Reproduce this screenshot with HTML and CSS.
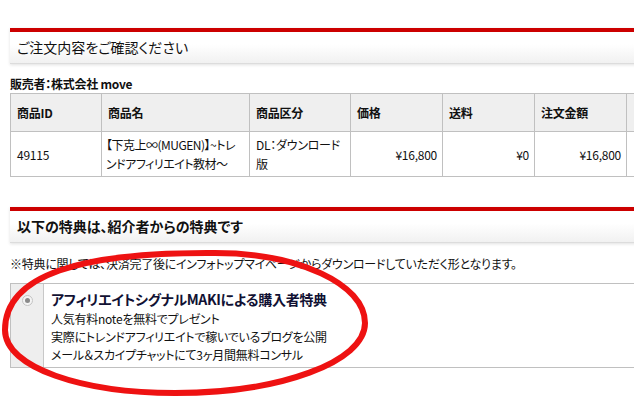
FILE: index.html
```html
<!DOCTYPE html>
<html lang="ja">
<head>
  <meta charset="UTF-8">
  <meta name="viewport" content="width=device-width, initial-scale=1.0">
  <title>ご注文内容の確認</title>
  <link rel="stylesheet" href="styles.css">
</head>
<body>
  <div class="page">
    <div class="section-head">
      <h2>ご注文内容をご確認ください</h2>
    </div>
    <p class="seller">販売者：株式会社 move</p>
    <table class="order">
      <colgroup>
        <col style="width: 91px">
        <col style="width: 148px">
        <col style="width: 101px">
        <col style="width: 92px">
        <col style="width: 92px">
        <col style="width: 92px">
        <col style="width: 100px">
      </colgroup>
      <thead>
        <tr>
          <th>商品ID</th>
          <th>商品名</th>
          <th>商品区分</th>
          <th>価格</th>
          <th>送料</th>
          <th>注文金額</th>
          <th></th>
        </tr>
      </thead>
      <tbody>
        <tr>
          <td>49115</td>
          <td class="name">【下克上∞(MUGEN)】~トレンドアフィリエイト教材～</td>
          <td>DL：ダウンロード版</td>
          <td class="num">¥16,800</td>
          <td class="num">¥0</td>
          <td class="num">¥16,800</td>
          <td></td>
        </tr>
      </tbody>
    </table>

    <div class="section-head">
      <h2 class="strong">以下の特典は、紹介者からの特典です</h2>
    </div>
    <p class="note">※特典に関しては、決済完了後にインフォトップマイページからダウンロードしていただく形となります。</p>
    <div class="bonus">
      <div class="bonus-check"><span class="radio"></span></div>
      <div class="bonus-body">
        <div class="bonus-title">アフィリエイトシグナルMAKIによる購入者特典</div>
        <p>人気有料noteを無料でプレゼント</p>
        <p>実際にトレンドアフィリエイトで稼いでいるブログを公開</p>
        <p>メール＆スカイプチャットにて3ヶ月間無料コンサル</p>
      </div>
    </div>
  </div>

  <!-- hand-drawn marker circle around the bonus -->
  <svg class="mark" width="634" height="410" viewBox="0 0 634 410">
    <path d="M5 330 C5 275 80 252 215 253 C298 253 365 284 365 323 C365 362 280 393 175 393 C83 393 5 368 5 330 Z" fill="none" stroke="#ee1212" stroke-width="6"/>
  </svg>
</body>
</html>
```

FILE: styles.css
```css
html, body {
  margin: 0;
  overflow: hidden;
}
body {
  position: relative;
  width: 634px;
  height: 410px;
  background: #fff;
  color: #111;
  font-family: "Noto Sans CJK JP", "Liberation Sans", sans-serif;
  font-size: 12px;
  font-feature-settings: "palt";
  letter-spacing: -0.25px;
}
.page {
  width: 716px;
  padding: 28px 0 0 10px;
}
.section-head {
  border-top: 4px solid #cc0000;
  background: linear-gradient(#fff 40%, #f1f1f1);
  border-bottom: 1px solid #dcdcdc;
  box-shadow: 0 1px 3px rgba(0, 0, 0, 0.12);
}
.section-head h2 {
  margin: 0;
  padding-left: 7px;
  height: 31px;
  line-height: 31px;
  font-size: 14px;
  font-weight: normal;
  color: #111;
  letter-spacing: 0;
}
.section-head h2.strong {
  font-weight: bold;
}
.seller {
  margin: 10px 0 0;
  line-height: 19px;
  font-weight: bold;
  font-size: 12px;
}
.order {
  border-collapse: collapse;
  table-layout: fixed;
  width: 716px;
  margin-bottom: 30px;
}
.order th,
.order td {
  border: 1px solid #c0c0c0;
  padding: 0 5px 0 6px;
  text-align: left;
  vertical-align: middle;
  line-height: 19px;
}
.order th {
  height: 37px;
  background: #efefef;
  font-weight: bold;
}
.order td {
  height: 42px;
  padding-top: 1px;
  padding-bottom: 1px;
}
.order td.name {
  padding-left: 4px;
  letter-spacing: -0.5px;
}
.order td.num {
  text-align: right;
}
.note {
  margin: 13px 0 11px;
  line-height: 16px;
}
.bonus {
  display: flex;
  border: 1px solid #c0c0c0;
  border-right: none;
}
.bonus-check {
  width: 32px;
  background: #eeeeee;
  border-right: 1px solid #c8c8c8;
  display: flex;
  justify-content: center;
  padding-top: 11px;
}
.radio {
  width: 9px;
  height: 9px;
  border: 1px solid #c4c4c4;
  border-radius: 50%;
  background: #f4f4f4;
  display: flex;
  align-items: center;
  justify-content: center;
}
.radio::after {
  content: "";
  width: 5px;
  height: 5px;
  border-radius: 50%;
  background: #8a8a8a;
}
.bonus-body {
  padding: 4px 0 3px 7px;
}
.bonus-title {
  font-size: 14px;
  font-weight: bold;
  line-height: 22px;
  color: #111133;
  letter-spacing: -0.3px;
}
.bonus-body p {
  margin: 0;
  line-height: 18px;
}
.mark {
  position: absolute;
  left: 0;
  top: 0;
  pointer-events: none;
}
```
